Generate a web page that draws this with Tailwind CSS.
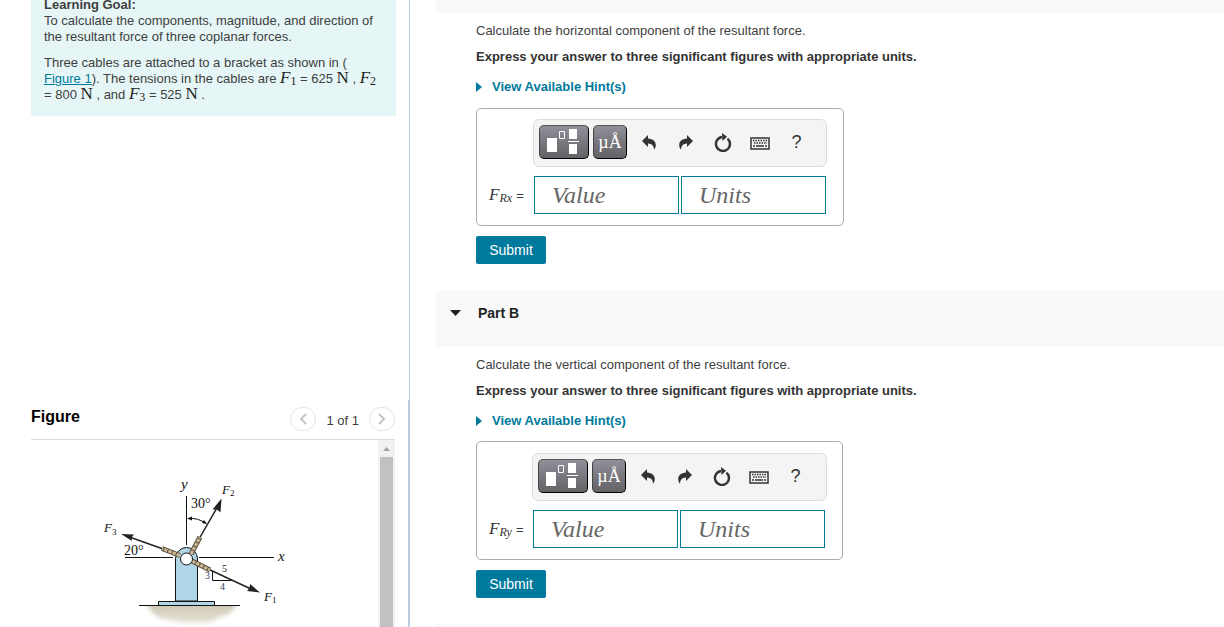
<!DOCTYPE html>
<html lang="en">
<head>
    <meta charset="UTF-8">
    <meta name="viewport" content="width=device-width, initial-scale=1.0">
    <title>Resultant Force of Three Coplanar Forces</title>
    <script src="https://cdn.jsdelivr.net/npm/@tailwindcss/browser@4"></script>
</head>
<body class="h-screen flex overflow-hidden bg-white font-['Liberation_Sans',Arial,sans-serif] text-[13px] leading-4 text-[#404040]">

    <!-- Left column: problem statement and figure -->
    <aside class="w-[410px] shrink-0 grid grid-rows-[400px_1fr]">
        <section class="pl-[31px] pr-[13px] border-r border-[#bccce0] overflow-hidden">
            <div class="bg-[#e6f6f6] -mt-[3px] px-[13px] pb-[13px]">
                <h2 class="font-bold">Learning Goal:</h2>
                <p>To calculate the components, magnitude, and direction of the resultant force of three coplanar forces.</p>
                <p class="mt-[10px]">Three cables are attached to a bracket as shown in (<br><a href="#figure" class="text-[#007a9c] underline">Figure 1</a>). The tensions in the cables are
                    <span class="font-['Liberation_Serif',serif] text-[17px] leading-0 text-[#222]"><i>F</i><sub class="text-xs leading-0 bottom-[-2px]">1</sub></span> = 625 <span class="font-['Liberation_Serif',serif] text-[17px] leading-0 text-[#222]">N</span> ,
                    <span class="font-['Liberation_Serif',serif] text-[17px] leading-0 text-[#222]"><i>F</i><sub class="text-xs leading-0 bottom-[-2px]">2</sub></span>
                    = 800 <span class="font-['Liberation_Serif',serif] text-[17px] leading-0 text-[#222]">N</span> , and
                    <span class="font-['Liberation_Serif',serif] text-[17px] leading-0 text-[#222]"><i>F</i><sub class="text-xs leading-0 bottom-[-2px]">3</sub></span> = 525 <span class="font-['Liberation_Serif',serif] text-[17px] leading-0 text-[#222]">N</span> .</p>
            </div>
        </section>

        <section id="figure" class="flex flex-col min-h-0 pl-[31px] pr-[13px] border-r-2 border-[#bccce0]">
            <header class="h-10 shrink-0 flex items-center justify-between border-b border-[#ddd]">
                <h2 class="text-base leading-4 font-bold text-black pb-[6px]">Figure</h2>
                <div class="flex items-center gap-[10px] pb-px">
                    <button type="button" aria-label="Previous figure" class="w-[26px] h-6 rounded-full border border-[#e4e4e4] flex items-center justify-center">
                        <svg width="8" height="12" viewBox="0 0 8 12" fill="none" stroke="#c4c4c4" stroke-width="2"><path d="M7 1L2 6l5 5"/></svg>
                    </button>
                    <span class="pt-[3px]">1 of 1</span>
                    <button type="button" aria-label="Next figure" class="w-[26px] h-6 rounded-full border border-[#e4e4e4] flex items-center justify-center">
                        <svg width="8" height="12" viewBox="0 0 8 12" fill="none" stroke="#c4c4c4" stroke-width="2"><path d="M1 1l5 5-5 5"/></svg>
                    </button>
                </div>
            </header>
            <div class="flex flex-1 min-h-0 justify-between">
                <svg class="ml-[69px] mt-[30px] shrink-0" width="200" height="157" viewBox="100 470 200 157" font-family="Liberation Serif, serif" fill="#111">
                    <defs>
                        <linearGradient id="soil" x1="0" y1="0" x2="0" y2="1">
                            <stop offset="0" stop-color="#c4bda8"/>
                            <stop offset="1" stop-color="#e6e2d6"/>
                        </linearGradient>
                        <filter id="soft" x="-20%" y="-30%" width="140%" height="180%"><feGaussianBlur stdDeviation="2"/></filter>
                        <clipPath id="below"><path d="M130 606h120v21H130z"/></clipPath>
                    </defs>
                    <!-- ground -->
                    <path d="M144 598h94c-4 14-8 17-16 18-6 3-12 9-22 6-14 2-26-1-34-3-10 0-16-7-22-21z" fill="url(#soil)" filter="url(#soft)" clip-path="url(#below)"/>
                    <!-- axes -->
                    <path d="M186.500 496v49M125 557.500h48M199 557.500h75" stroke="#111" fill="none"/>
                    <!-- bracket -->
                    <path d="M175.500 601v-42a11 11.500 0 0 1 22 0v42z" fill="#b0d5e6" stroke="#111"/>
                    <path d="M158.500 601.500h56v4h-56z" fill="#b0d5e6" stroke="#111"/>
                    <path d="M139 605.500h101" stroke="#111"/>
                    <!-- cables -->
                    <g stroke="#222" stroke-width="1.500">
                        <path d="M180 555L128 536.500M191 553l27-47M193 562l58 27"/>
                    </g>
                    <path d="M121 534l13 .5-2.500 3 .5 3.500zM221.500 498.500l-1 14-3.500-3-4.500 0zM260 592.500l-13-1.500 2.500-3 .5-4z" fill="#222"/>
                    <g stroke="#5c5040" stroke-width="5">
                        <path d="M180 555.500l-18-7M191 554l9-17M192 561l18 9"/>
                    </g>
                    <g stroke="#cbb896" stroke-width="3" stroke-dasharray="3.500 1">
                        <path d="M180 555.500l-18-7M191 554l9-17M192 561l18 9"/>
                    </g>
                    <circle cx="186.500" cy="559" r="6" fill="#fff" stroke="#111"/>
                    <!-- 30 degree arc and slope triangle -->
                    <path d="M188 518.500q10-1 18 5M212.500 571v9.500h19" fill="none" stroke="#111"/>
                    <path d="M187 518.500l5-2v4zM207 524l-5-1 2-3z"/>
                    <text x="181" y="489" font-size="15" font-style="italic">y</text>
                    <text x="278" y="561" font-size="15" font-style="italic">x</text>
                    <text x="191" y="508" font-size="14">30°</text>
                    <text x="124" y="555" font-size="14">20°</text>
                    <text x="222" y="494" font-size="13" font-style="italic">F<tspan font-size="9" dy="2" font-style="normal">2</tspan></text>
                    <text x="104" y="532" font-size="13" font-style="italic">F<tspan font-size="9" dy="3" font-style="normal">3</tspan></text>
                    <text x="264" y="601" font-size="13" font-style="italic">F<tspan font-size="9" dy="2" font-style="normal">1</tspan></text>
                    <g font-size="10" fill="#222">
                        <text x="222" y="572">5</text>
                        <text x="205" y="579" fill="#2c3e60">3</text>
                        <text x="220" y="590" fill="#2c3e60">4</text>
                    </g>
                </svg>
                <!-- scroll track -->
                <div class="w-[17px] bg-[#f1f1f1] flex flex-col items-center" aria-hidden="true">
                    <svg class="mt-[7px] mb-[5px] shrink-0" width="7" height="5" viewBox="0 0 7 5" fill="#a3a3a3"><path d="M3.500 0L7 4H0z"/></svg>
                    <div class="w-[13px] flex-1 bg-[#c1c1c1]"></div>
                </div>
            </div>
        </section>
    </aside>

    <!-- Right column: question parts -->
    <main class="flex-1 min-w-0 ml-[26px]">
        <div class="h-[13px] bg-[#f9f9f9]"></div>

        <form class="pl-10 pt-[10px] pb-[26px]" onsubmit="return false">
            <p>Calculate the horizontal component of the resultant force.</p>
            <p class="mt-[10px] font-bold text-[#333]">Express your answer to three significant figures with appropriate units.</p>
            <button type="button" class="mt-[14px] flex items-center gap-[10px] font-bold text-[#007a9c]">
                <svg width="6" height="10" viewBox="0 0 6 10" fill="currentColor"><path d="M0 0l6 5-6 5z"/></svg>
                View Available Hint(s)
            </button>
            <div class="mt-[13px] w-[368px] border border-[#aaa] rounded-[5px] pt-[10px] pr-4 pb-[11px]">
                <div class="ml-14 h-12 flex items-center pl-[5px] pb-[2px] bg-[#f4f4f4] border border-[#ddd] rounded-md text-[#333]">
                    <button type="button" aria-label="Templates" class="w-[50px] h-[34px] rounded-[5px] border border-black border-t-[#555] border-l-[#444] bg-linear-to-b from-[#918f98] to-[#646266]">
                        <svg class="-m-px" width="50" height="34" viewBox="0 0 50 34" fill="#fff"><path d="M8 13h10v14H8zM30 4h8v10h-8zM30 19h8v10h-8zM29 16h11v1H29z"/><path d="M20.500 6.500h5v7h-5z" fill="none" stroke="#fff"/></svg>
                    </button>
                    <button type="button" aria-label="Symbols" class="ml-1 w-[34px] h-[34px] rounded-[5px] border border-black border-t-[#555] border-l-[#444] bg-linear-to-b from-[#918f98] to-[#646266] text-white font-['Liberation_Serif',serif] text-lg leading-8">µÅ</button>
                    <button type="button" aria-label="Undo" class="ml-[3px] w-[37px] h-[34px] flex items-center justify-center">
                        <svg width="14" height="15" viewBox="0 0 14 15" fill="#333"><path d="M0 6l6-6v3.500c5 .3 7.800 3 7.800 6.500 0 2-.8 3.700-1.800 4.800C12 11 10 8.700 6 8.500V12z"/></svg>
                    </button>
                    <button type="button" aria-label="Redo" class="w-[37px] h-[34px] flex items-center justify-center">
                        <svg width="14" height="15" viewBox="0 0 14 15" fill="#333"><path d="M14 6L8 0v3.500C3 3.800.2 6.500.2 10c0 2 .8 3.700 1.800 4.800C2 11 4 8.700 8 8.500V12z"/></svg>
                    </button>
                    <button type="button" aria-label="Reset" class="w-[37px] h-[34px] flex items-center justify-center">
                        <svg width="18" height="19" viewBox="0 0 18 19"><path d="M13.500 5.600A7 7 0 1 1 8 4" fill="none" stroke="#333" stroke-width="2.400"/><path d="M8 0l5 3.700L8.500 8z" fill="#333"/></svg>
                    </button>
                    <button type="button" aria-label="Keyboard" class="w-[37px] h-[34px] flex items-center justify-center pt-[3px]">
                        <svg width="20" height="13" viewBox="0 0 20 13" fill="none" stroke="#333"><path d="M1 1h18v11H1z" stroke-width="1.500"/><path d="M3 3.500h14M4 6h13" stroke-width="1.500" stroke-dasharray="1.500 1"/><path d="M3 9h2M6 9h8M15 9h2" stroke-width="1.500"/></svg>
                    </button>
                    <button type="button" aria-label="Help" class="w-[37px] h-[34px] text-lg leading-8">?</button>
                </div>
                <div class="mt-[9px] flex items-center">
                    <label for="value-a" class="w-[57px] pl-3 font-['Liberation_Serif',serif] text-[17px] leading-5 text-[#333]"><i>F<sub class="text-xs leading-0 bottom-[-2px]">Rx</sub></i> <span class="font-['Liberation_Sans',sans-serif] text-[13px]">=</span></label>
                    <input id="value-a" type="text" placeholder="Value" class="w-[145px] h-[38px] border border-[#007a9c] px-[17px] font-['Liberation_Serif',serif] italic text-2xl placeholder:text-[#666]">
                    <input type="text" placeholder="Units" aria-label="Units" class="ml-[2px] w-[145px] h-[38px] border border-[#007a9c] px-[17px] font-['Liberation_Serif',serif] italic text-2xl placeholder:text-[#666]">
                </div>
            </div>
            <button type="submit" class="mt-[10px] block w-[70px] h-7 rounded-xs bg-[#007a9c] text-white text-sm">Submit</button>
        </form>

        <header class="h-[57px] bg-[#f9f9f9] px-[14px] pt-[15px]">
            <button type="button" class="flex items-center gap-[17px] text-sm leading-4 font-bold text-[#222]">
                <svg width="11" height="6" viewBox="0 0 11 6" fill="currentColor"><path d="M0 0h11L5.500 6z"/></svg>
                Part B
            </button>
        </header>

        <form class="pl-10 pt-[10px] pb-[26px]" onsubmit="return false">
            <p>Calculate the vertical component of the resultant force.</p>
            <p class="mt-[10px] font-bold text-[#333]">Express your answer to three significant figures with appropriate units.</p>
            <button type="button" class="mt-[14px] flex items-center gap-[10px] font-bold text-[#007a9c]">
                <svg width="6" height="10" viewBox="0 0 6 10" fill="currentColor"><path d="M0 0l6 5-6 5z"/></svg>
                View Available Hint(s)
            </button>
            <div class="mt-3 w-[367px] border border-[#aaa] rounded-[5px] pt-[11px] pr-[15px] pb-[11px]">
                <div class="ml-[55px] h-12 flex items-center pl-[5px] pb-[2px] bg-[#f4f4f4] border border-[#ddd] rounded-md text-[#333]">
                    <button type="button" aria-label="Templates" class="w-[50px] h-[34px] rounded-[5px] border border-black border-t-[#555] border-l-[#444] bg-linear-to-b from-[#918f98] to-[#646266]">
                        <svg class="-m-px" width="50" height="34" viewBox="0 0 50 34" fill="#fff"><path d="M8 13h10v14H8zM30 4h8v10h-8zM30 19h8v10h-8zM29 16h11v1H29z"/><path d="M20.500 6.500h5v7h-5z" fill="none" stroke="#fff"/></svg>
                    </button>
                    <button type="button" aria-label="Symbols" class="ml-1 w-[34px] h-[34px] rounded-[5px] border border-black border-t-[#555] border-l-[#444] bg-linear-to-b from-[#918f98] to-[#646266] text-white font-['Liberation_Serif',serif] text-lg leading-8">µÅ</button>
                    <button type="button" aria-label="Undo" class="ml-[3px] w-[37px] h-[34px] flex items-center justify-center">
                        <svg width="14" height="15" viewBox="0 0 14 15" fill="#333"><path d="M0 6l6-6v3.500c5 .3 7.800 3 7.800 6.500 0 2-.8 3.700-1.800 4.800C12 11 10 8.700 6 8.500V12z"/></svg>
                    </button>
                    <button type="button" aria-label="Redo" class="w-[37px] h-[34px] flex items-center justify-center">
                        <svg width="14" height="15" viewBox="0 0 14 15" fill="#333"><path d="M14 6L8 0v3.500C3 3.800.2 6.500.2 10c0 2 .8 3.700 1.800 4.800C2 11 4 8.700 8 8.500V12z"/></svg>
                    </button>
                    <button type="button" aria-label="Reset" class="w-[37px] h-[34px] flex items-center justify-center">
                        <svg width="18" height="19" viewBox="0 0 18 19"><path d="M13.500 5.600A7 7 0 1 1 8 4" fill="none" stroke="#333" stroke-width="2.400"/><path d="M8 0l5 3.700L8.500 8z" fill="#333"/></svg>
                    </button>
                    <button type="button" aria-label="Keyboard" class="w-[37px] h-[34px] flex items-center justify-center pt-[3px]">
                        <svg width="20" height="13" viewBox="0 0 20 13" fill="none" stroke="#333"><path d="M1 1h18v11H1z" stroke-width="1.500"/><path d="M3 3.500h14M4 6h13" stroke-width="1.500" stroke-dasharray="1.500 1"/><path d="M3 9h2M6 9h8M15 9h2" stroke-width="1.500"/></svg>
                    </button>
                    <button type="button" aria-label="Help" class="w-[37px] h-[34px] text-lg leading-8">?</button>
                </div>
                <div class="mt-[9px] flex items-center">
                    <label for="value-b" class="w-14 pl-3 font-['Liberation_Serif',serif] text-[17px] leading-5 text-[#333]"><i>F<sub class="text-xs leading-0 bottom-[-2px]">Ry</sub></i> <span class="font-['Liberation_Sans',sans-serif] text-[13px]">=</span></label>
                    <input id="value-b" type="text" placeholder="Value" class="w-[145px] h-[38px] border border-[#007a9c] px-[17px] font-['Liberation_Serif',serif] italic text-2xl placeholder:text-[#666]">
                    <input type="text" placeholder="Units" aria-label="Units" class="ml-[2px] w-[145px] h-[38px] border border-[#007a9c] px-[17px] font-['Liberation_Serif',serif] italic text-2xl placeholder:text-[#666]">
                </div>
            </div>
            <button type="submit" class="mt-[10px] block w-[70px] h-7 rounded-xs bg-[#007a9c] text-white text-sm">Submit</button>
        </form>
        <div class="h-[57px] bg-[#f9f9f9]"></div>
    </main>
</body>
</html>
